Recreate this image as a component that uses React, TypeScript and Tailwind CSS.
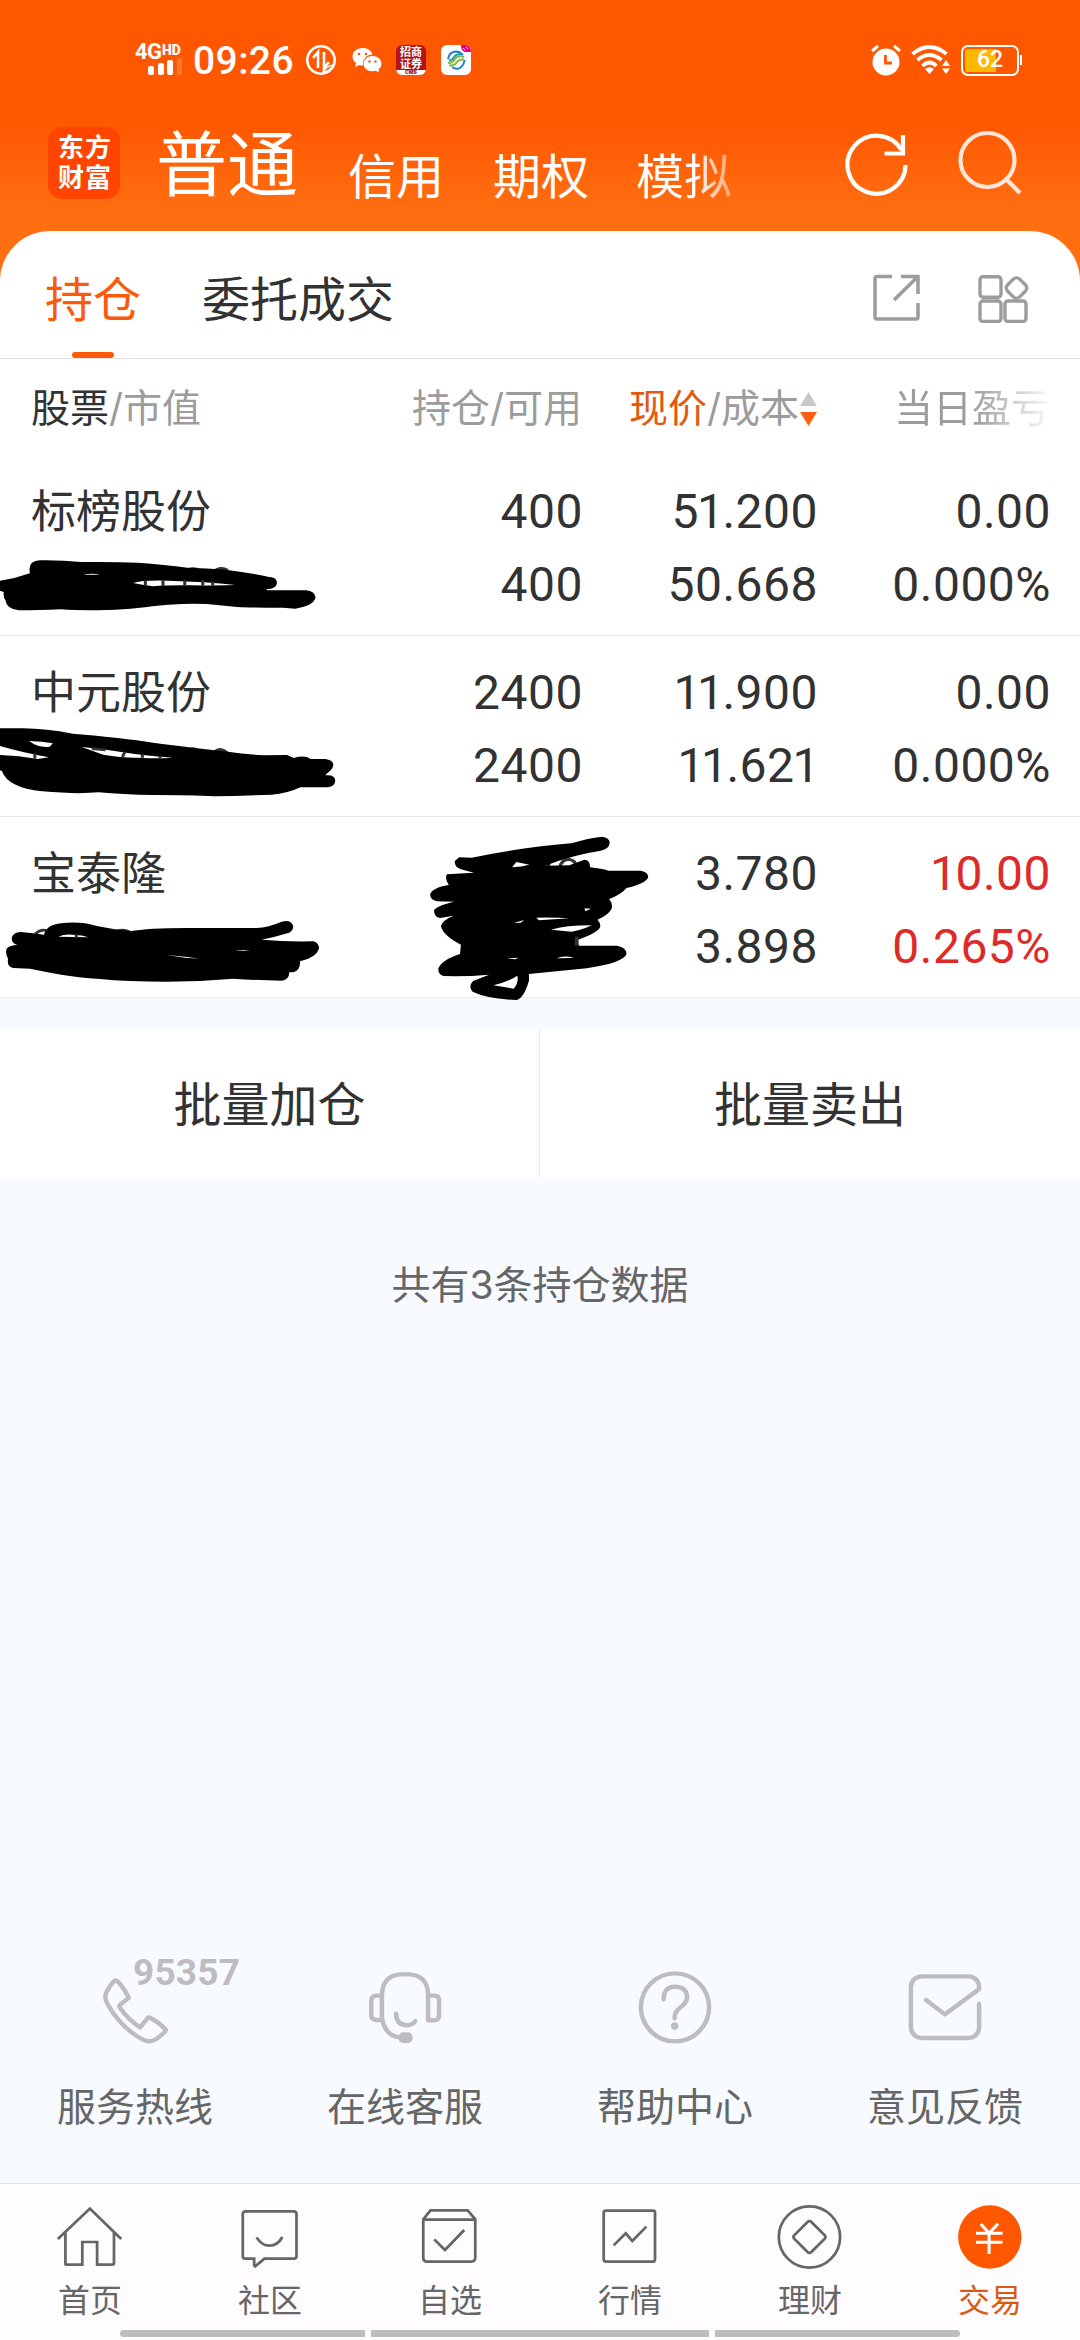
import React from 'react';

type Holding = {
  name: string;
  qty?: [string, string];
  price: [string, string];
  profit: [string, string];
  up?: boolean;
  mask: React.ReactNode;
};

const Mask1 = () => (
  <svg className="absolute left-0 top-[102px] h-[57px] w-[329px]" viewBox="0 290 860 171" preserveAspectRatio="none">
    <path d="M492 326Q505 320 518 326ZM566 326Q580 318 596 328Z" stroke="#333" strokeWidth="5" fill="#333" />
    <path
      fillRule="evenodd"
      d="M0 361Q40 355 78 339L77 326Q77 302 104 300Q160 299 212 305Q300 304 360 307Q430 313 490 322Q540 324 590 328Q650 337 700 349Q724 349 724 368Q722 386 697 387V390H800Q822 392 825 411Q820 437 772 445L740 442Q660 442 620 440L540 431Q500 428 440 433C380 439 340 447 280 449Q210 451 160 447Q100 450 50 450Q17 447 14 419Q8 410 10 395L0 391ZM217 343Q240 338 262 343ZM348 368Q370 359 440 361Q540 364 615 374Q540 376 500 375Q440 374 400 378Q370 373 348 368Z"
    />
    <path d="M380 360V376M426 360V378M483 360V376M530 360V376M556 364V376" stroke="#333" strokeWidth="8" />
  </svg>
);

const Mask2 = () => (
  <svg className="absolute left-0 top-[88px] h-[77px] w-[340px]" viewBox="0 794 888.4 231" preserveAspectRatio="none">
    <path d="M490 872Q505 860 516 872ZM560 876Q575 860 594 878Z" stroke="#333" strokeWidth="5" fill="#333" />
    <path
      fillRule="evenodd"
      d="M0 807H60Q120 808 190 823Q320 835 400 850Q520 868 595 877Q640 885 690 888L750 887L768 896Q795 886 812 899H850Q871 902 871 917Q870 930 855 942L850 948Q876 945 876 965Q874 983 855 984H785Q750 1003 710 1006Q630 1010 560 1011Q500 1007 400 1007Q320 1006 258 999Q200 1005 110 996Q20 985 5 935L0 933ZM0 860V887Q50 889 98 899L128 894Q60 880 0 860ZM76 845Q100 866 130 862L138 852Q110 846 76 845ZM213 863Q250 878 270 886Q320 896 360 895Q420 898 450 895Q370 888 330 880Q270 868 213 863Z"
    />
    <path d="M91 882V898M240 868L276 872M326 878L320 893M372 884V895M418 890V896" stroke="#333" strokeWidth="8" />
  </svg>
);

const Mask3 = () => (
  <svg className="absolute left-0 top-[98px] h-[67px] w-[327px]" viewBox="0 405 981 201" preserveAspectRatio="none">
    <path d="M105 462Q122 446 142 452M350 454Q370 446 390 456" stroke="#333" strokeWidth="8" fill="none" />
    <path
      fillRule="evenodd"
      d="M35 476Q38 456 62 456Q100 459 132 464Q138 433 190 429Q245 424 290 438Q340 448 390 454Q450 443 580 444H770Q805 442 845 425Q875 417 880 440Q878 456 862 460Q820 473 785 479Q860 486 940 484Q957 488 957 506Q948 533 900 544Q902 570 880 577H868Q867 600 846 602Q770 601 700 596Q600 605 500 605Q380 605 300 597C210 591 150 578 90 566L40 564Q20 560 24 536Q15 520 20 506Q29 495 52 495Q36 490 35 476ZM175 470Q195 461 225 465Q245 465 265 472ZM500 525L555 530L600 536L555 533ZM706 512Q730 508 750 512Z"
    />
    <path d="M229 463V474" stroke="#333" strokeWidth="9" />
  </svg>
);

const MaskQty = () => (
  <svg className="absolute left-[421px] top-[11px] h-[177px] w-[234px]" viewBox="48 144 539.6 531" preserveAspectRatio="none">
    <path d="M230 248Q240 254 242 264M342 235V262M368 262Q372 238 390 238Q404 240 408 264" stroke="#333" strokeWidth="8" fill="none" />
    <path
      fillRule="evenodd"
      d="M136 232L165 233Q270 204 395 190Q435 174 465 170Q484 173 483 190Q482 208 460 213Q400 224 335 257L390 256L425 239Q438 240 438 262Q465 266 480 272H555Q572 276 572 292Q565 312 522 324Q510 343 482 357Q490 370 488 385Q482 405 455 419Q463 430 461 442Q457 458 405 482L413 497H500Q522 502 522 522Q515 548 430 565L297 582V602Q285 655 268 660Q200 656 167 635Q156 620 168 603L205 584Q150 590 100 588Q87 582 88 566Q95 540 138 522L140 494Q98 466 94 438Q98 420 123 407L92 414Q78 410 78 392Q81 378 125 365L85 364Q69 360 69 343Q74 323 112 315Q102 295 108 283L170 278L140 268Q124 260 126 243ZM268 246L258 262Q280 261 298 254ZM425 385L440 386L427 394ZM262 429L286 420L278 428ZM314 413Q360 412 390 415L320 421ZM348 449Q380 436 442 436Q415 452 395 455ZM163 514L182 516ZM246 536L272 533L266 538ZM360 535Q380 525 400 534ZM215 616Q250 605 270 587Q274 608 262 626Z"
    />
    <path d="M407 470V497" stroke="#333" strokeWidth="9" />
  </svg>
);

const holdings: Holding[] = [
  { name: '标榜股份', qty: ['400', '400'], price: ['51.200', '50.668'], profit: ['0.00', '0.000%'], mask: <Mask1 /> },
  { name: '中元股份', qty: ['2400', '2400'], price: ['11.900', '11.621'], profit: ['0.00', '0.000%'], mask: <Mask2 /> },
  {
    name: '宝泰隆',
    price: ['3.780', '3.898'],
    profit: ['10.00', '0.265%'],
    up: true,
    mask: (
      <>
        <Mask3 />
        <MaskQty />
      </>
    ),
  },
];

// Tightens the space around the digit 1, which Roboto sets at full tabular width.
const Num = ({ v }: { v: string }) => (
  <span>
    {v.split('').map((c, i) =>
      c === '1' ? (
        <span key={i} className="-ml-[2px] -mr-[2px]">
          {c}
        </span>
      ) : (
        c
      ),
    )}
  </span>
);

const Pair = ({ v, className = '' }: { v?: [string, string]; className?: string }) => (
  <div className={`flex flex-col text-right font-['Roboto'] text-[48px] leading-[73px] tracking-[0.5px] ${className}`}>
    {v && (
      <>
        <Num v={v[0]} />
        <Num v={v[1]} />
      </>
    )}
  </div>
);

const StatusBar = () => (
  <div className="flex h-[120px] items-center pl-[135px] pr-[58px] text-white">
    <div className="relative h-[32px] w-[49px] font-['Roboto']">
      <span className="absolute left-0 top-[-2px] text-[22px] font-bold leading-[20px] tracking-[-0.5px]">4G</span>
      <span className="absolute left-[27px] top-[-1px] text-[14px] font-black leading-[14px]">HD</span>
      <svg className="absolute left-[12px] top-[14px]" width="36" height="17" fill="#fff">
        <rect x="1" y="8" width="6" height="9" rx="2" />
        <rect x="11" y="5" width="6" height="12" rx="2" />
        <rect x="20" y="2" width="6" height="15" rx="2" />
        <rect x="30" y="0" width="5" height="17" rx="2" opacity=".2" />
      </svg>
    </div>
    <span className="ml-[9px] w-[101px] whitespace-nowrap pt-[2px] font-['Roboto'] text-[39px] font-medium leading-[40px] tracking-[0.4px]">09:26</span>
    <svg className="ml-[11px]" width="32" height="32" viewBox="0 0 32 32" fill="none" stroke="#fff" strokeWidth="2.6">
      <circle cx="16" cy="16" r="13.7" />
      <path d="M13 24V8L8 14M19 8V24L24 18" />
      <path d="M18 28Q20 23 28 21Q26 27 18 28Z" fill="#ff5600" strokeWidth="1.6" />
    </svg>
    <svg className="ml-[15px]" width="30" height="26" viewBox="0 0 30 26">
      <path fill="#fff" d="M10.500 1C4.500 1 .5 5 .5 9.600c0 3 1.500 5 3.500 6.500L3.200 20l4-2c1.200.4 2.200.5 3.800.5C10 12 15 7.500 20.500 7.500 19.500 3.500 15.500 1 10.500 1Z" />
      <path fill="#fff" d="M20.500 9c-5 0-9 3.500-9 7.700s4 7.600 9 7.600c1.200 0 2.300-.2 3.300-.5l3.400 1.700-.7-3.200c1.800-1.400 3-3.300 3-5.600C29.500 12.500 25.500 9 20.500 9Z" />
      <g fill="#ff5600">
        <circle cx="7" cy="7" r="1.300" />
        <circle cx="14" cy="7" r="1.300" />
        <circle cx="17.500" cy="14.500" r="1.200" />
        <circle cx="23.500" cy="14.500" r="1.200" />
      </g>
    </svg>
    <div className="ml-[14px] flex h-[30px] w-[30px] flex-col items-center overflow-hidden rounded-[6px] bg-[#b5121a] text-center">
      <span className="h-[12px] pt-[1px] text-[11px] font-bold leading-[12px]">招商</span>
      <span className="h-[13px] pt-px text-[11px] font-bold leading-[12px]">证券</span>
      <span className="h-[5px] w-full bg-white text-[5px] font-black leading-[5px] text-[#a31520]">CMS</span>
    </div>
    <svg className="ml-[15px]" width="30" height="30" viewBox="0 0 30 30">
      <defs>
        <clipPath id="tile">
          <rect width="30" height="30" rx="6" />
        </clipPath>
      </defs>
      <g clipPath="url(#tile)">
        <rect width="30" height="30" fill="#fff" />
        <path d="M20 0H30V7H24Q20 6 20 0Z" fill="#e4007f" />
        <path d="M22 3l2 2M25 2l2 2" stroke="#fff" strokeWidth="1" />
      </g>
      <g fill="none" strokeWidth="1.900">
        <path d="M7 14Q8 7 15 6.500Q19 6.500 22 10M11 22Q15 25 19 23Q23 20 23.500 15" stroke="#1b7fc4" />
        <path d="M7 18Q12 18 14 14Q17 10 23 12M8 20.500Q14 21 16 17Q18 14 23 14.500" stroke="#7dbb3c" />
        <path d="M8 15.500Q12 15 13 12Q16 8 21 9.500" stroke="#1b9bb4" />
      </g>
    </svg>
    <svg className="ml-auto" width="30" height="32" viewBox="0 0 30 32">
      <circle cx="15" cy="18" r="13.500" fill="#fff" />
      <path d="M1 7L7 2M29 7L23 2" stroke="#fff" strokeWidth="3" />
      <path d="M14.500 11V19H21" stroke="#ff5600" strokeWidth="2.800" fill="none" />
    </svg>
    <svg className="ml-[10px]" width="40" height="30" viewBox="0 0 40 30">
      <g fill="none" stroke="#fff" strokeWidth="3.800">
        <path d="M1.500 9Q18.500 -5 35.500 9" />
        <path d="M6.500 15Q18.500 5 30.500 15" />
        <path d="M11.500 21Q18.500 14 25.500 21" />
      </g>
      <path d="M14 24Q18.500 20.500 23 24L18.500 29ZM35 15L39 21H31ZM35 29L39 23.500H31Z" fill="#fff" />
    </svg>
    <div className="relative ml-[10px] flex h-[31px] w-[58px] items-center justify-center rounded-[7px] border-2 border-white p-[2px]">
      <span className="absolute left-[2px] top-[2px] h-[23px] w-[31px] rounded-l-[3px] bg-[#ffb800]" />
      <span className="relative font-['Roboto'] text-[23px] font-medium leading-[22px]">62</span>
    </div>
    <span className="ml-px h-[10px] w-[2px] bg-white" />
  </div>
);

const TopNav = () => (
  <div className="flex h-[111px] items-start pl-[48px] text-white">
    <div className="mt-[7px] flex h-[72px] w-[72px] flex-col items-center rounded-[14px] bg-[#ff4500] pl-[2px] pt-[6px] text-[26px] font-bold leading-[30px] tracking-[1px]">
      <span>东方</span>
      <span>财富</span>
    </div>
    <span className="ml-[36px] text-[71px] leading-[88px]">普通</span>
    <span className="ml-[50px] mt-[26px] text-[48px] leading-[62px]">信用</span>
    <span className="ml-[49px] mt-[26px] text-[48px] leading-[62px]">期权</span>
    <span className="ml-[47px] mt-[26px] bg-gradient-to-r from-white from-60% to-white/40 bg-clip-text text-[48px] leading-[62px] text-transparent">
      模拟
    </span>
    <svg className="ml-[113px] mt-[10px]" width="64" height="68" viewBox="0 0 64 68" fill="none" stroke="#fff" strokeWidth="4.200">
      <path d="M60.500 35A29 29 0 1 1 56.500 20" />
      <path d="M58 5V23.500H39.500" />
    </svg>
    <svg className="ml-[49px] mt-[10px]" width="66" height="68" viewBox="0 0 66 68" fill="none" stroke="#ffe6d8" strokeWidth="4.200">
      <circle cx="29.500" cy="30" r="27" />
      <path d="M48 49L62 63" />
    </svg>
  </div>
);

const services = [
  {
    label: '服务热线',
    box: '0 80 784 270',
    art: (
      <path d="M331 152Q336 148 341 153Q360 173 374 202L347 225Q346 230 349 233Q374 270 407 291L428 264Q432 260 437 263Q462 276 482 299Q480 306 455 325Q435 339 415 328C365 301 335 263 312 221Q301 200 310 184Q318 167 331 152Z" />
    ),
  },
  {
    label: '在线客服',
    box: '784 80 784 270',
    art: (
      <>
        <path d="M1109 196V262Q1117 316 1160 321M1109 196Q1110 136 1162 132H1190Q1240 136 1243 190V270H1262Q1275 268 1275 256V210Q1275 197 1262 196H1243M1109 196H1092Q1078 198 1078 212V254Q1078 268 1092 269H1109M1150 250Q1151 284 1182 285Q1198 284 1206 272" />
        <rect x="1157" y="306" width="41" height="32" rx="14" fill="#bfbcbf" stroke="none" />
      </>
    ),
  },
  {
    label: '帮助中心',
    box: '0 80 784 270',
    art: (
      <>
        <ellipse cx="392" cy="231" rx="99" ry="102" />
        <path d="M359 207Q359 170 392 169Q427 170 427 201Q426 217 407 232Q390 245 391 264" />
        <circle cx="391" cy="287" r="11" fill="#bfbcbf" stroke="none" />
      </>
    ),
  },
  {
    label: '意见反馈',
    box: '784 80 784 270',
    art: (
      <path d="M1121 209L1176 252L1275 177V170Q1273 140 1244 138H1110Q1080 140 1077 168V293Q1080 321 1110 323H1244Q1272 321 1275 293V220" />
    ),
  },
];

const tabs = [
  { label: '首页', box: '0 820 522.700 204', art: <path d="M168 928L261 837L352 928M190 908V1003Q190 1005 194 1005H239V937H282V1005H326Q331 1005 331 1001V908" /> },
  { label: '社区', box: '522.700 820 522.700 204', art: <path d="M712 845H854Q861 846 861 853V980Q861 987 854 987H768L741 1010L738 1007V987H712Q705 987 705 980V853Q705 846 712 845ZM745 923Q760 948 783 948Q806 948 820 922" /> },
  { label: '自选', box: '1045.300 820 522.700 204', art: <path d="M1229 869L1250 842H1358L1380 869V985Q1379 996 1369 996H1239Q1229 995 1229 985ZM1229 870H1380M1261 929L1292 961L1348 901" /> },
  { label: '行情', box: '0 820 522.700 204', art: <path d="M192 843H328Q334 843 334 849V989Q334 996 328 996H192Q185 996 185 989V849Q185 843 192 843ZM214 947L249 911L268 934L309 891" /> },
  {
    label: '理财',
    box: '522.700 820 522.700 204',
    art: (
      <>
        <ellipse cx="782.500" cy="922" rx="89" ry="92" />
        <path d="M777 877Q782.500 871 788 877L827 917Q831 922 827 927L788 967Q782.500 973 777 967L738 927Q734 922 738 917Z" />
      </>
    ),
  },
  {
    label: '交易',
    box: '1045.300 820 522.700 204',
    active: true,
    art: (
      <>
        <ellipse cx="1306" cy="922" rx="92" ry="95" fill="#ff5600" stroke="none" />
        <path d="M1280 883L1304 911L1330 882M1266 911H1343M1266 938H1343M1304 911V973" stroke="#fff" strokeWidth="9" />
      </>
    ),
  },
];

export default function App() {
  return (
    <div className="flex h-[2340px] w-[1080px] flex-col overflow-hidden bg-[#f7faff] font-['Inter','Noto_Sans_CJK_SC',sans-serif] text-[#323232]">
      <header className="h-[290px] shrink-0 bg-[linear-gradient(180deg,#ff5600_0px,#ff5600_115px,#ff6f12_215px,#ff6f12_290px)]">
        <StatusBar />
        <TopNav />
      </header>

      <main className="relative z-10 -mt-[59px] shrink-0 rounded-t-[50px] bg-white">
        <div className="flex h-[128px] items-center border-b border-[#e2e2e2] pl-[45px] pr-[51px] text-[48px]">
          <div className="relative flex h-full items-center text-[#fb5a0a]">
            <span className="mt-[10px]">持仓</span>
            <span className="absolute bottom-0 left-[27px] h-[6px] w-[42px] rounded-full bg-[#fb5a0a]" />
          </div>
          <span className="ml-[61px] mt-[10px]">委托成交</span>
          <svg className="ml-auto mt-[7px]" width="48" height="48" viewBox="0 0 48 48" fill="none" stroke="#9c9c9c" strokeWidth="3.500">
            <path d="M20 2.500H5Q3 2.500 3 4.500V43Q3 45 5 45H44Q46 45 46 43V29M29 2.500H46V20M45 3.500L22 26" />
          </svg>
          <svg className="ml-[58px] mt-[8px]" width="51" height="48" viewBox="0 0 51 48" fill="none" stroke="#9c9c9c" strokeWidth="3.400">
            <rect x="2" y="1.700" width="21" height="20.500" rx="3" />
            <rect x="2" y="26" width="21" height="20.500" rx="3" />
            <rect x="27" y="26" width="21" height="20.500" rx="3" />
            <rect x="30" y="4.500" width="17" height="17" rx="4.500" transform="rotate(45 38.500 13)" />
          </svg>
        </div>

        <div className="grid h-[96px] grid-cols-[1fr_230px_235px_233px] items-center pl-[31px] pr-[30px] pt-[3px] text-[39px] text-[#9c9c9c]">
          <div>
            <span className="text-[#323232]">股票</span>/市值
          </div>
          <div className="text-right">持仓/可用</div>
          <div className="flex items-center justify-end">
            <span>
              <span className="text-[#e05a10]">现价</span>/成本
            </span>
            <svg className="ml-px" width="17" height="36" viewBox="0 0 17 36">
              <path d="M8.500 1L17 15H0Z" fill="#c8c8c8" />
              <path d="M8.500 35L17 21H0Z" fill="#ff6010" />
            </svg>
          </div>
          <div className="flex justify-end">
            <span className="bg-gradient-to-r from-[#9c9c9c] from-50% to-[#fbf8fb] bg-clip-text text-transparent">当日盈亏</span>
          </div>
        </div>

        {holdings.map((h) => (
          <div
            key={h.name}
            className="relative grid h-[181px] grid-cols-[1fr_230px_235px_233px] border-b border-[#ebebeb] pl-[31px] pr-[29px] pt-[20px]"
          >
            <span className="text-[45px] leading-[74px]">{h.name}</span>
            <Pair v={h.qty} />
            <Pair v={h.price} />
            <Pair v={h.profit} className={h.up ? 'text-[#de2a28]' : ''} />
            {h.mask}
          </div>
        ))}
      </main>

      <div className="mt-[30px] grid h-[150px] shrink-0 grid-cols-2 bg-white pt-[3px] text-[48px]">
        <div className="-mt-[3px] flex items-center justify-center border-r border-[#ebebeb] pt-[3px]">批量加仓</div>
        <div className="flex items-center justify-center">批量卖出</div>
      </div>

      <p className="mt-[77px] text-center text-[39px] leading-[60px] text-[#666]">共有3条持仓数据</p>

      <section className="mt-auto grid shrink-0 grid-cols-4 pb-[56px]">
        {services.map((s) => (
          <div key={s.label} className="relative flex flex-col items-center">
            <svg width="270" height="90" viewBox={s.box} preserveAspectRatio="none" fill="none" stroke="#bfbcbf" strokeWidth="13" strokeLinecap="round" strokeLinejoin="round">
              {s.art}
            </svg>
            {s.label === '服务热线' && (
              <span className="absolute left-[133px] top-[-3px] font-['Roboto'] text-[37px] font-bold leading-[38px] tracking-[0.2px] text-[#bfbcbf]">
                95357
              </span>
            )}
            <span className="mt-[40px] text-[39px] leading-[40px] text-[#666]">{s.label}</span>
          </div>
        ))}
      </section>

      <nav className="relative grid h-[157px] shrink-0 grid-cols-6 border-t border-[#e4e4e8] bg-[#fffcff] pt-[19px]">
        {tabs.map((t) => (
          <div key={t.label} className="flex flex-col items-center">
            <svg width="180" height="68" viewBox={t.box} preserveAspectRatio="none" fill="none" stroke="#666" strokeWidth="8">
              {t.art}
            </svg>
            <span className={`text-[32px] leading-[60px] ${t.active ? 'text-[#d95a14]' : 'text-[#666]'}`}>{t.label}</span>
          </div>
        ))}
        <div className="absolute bottom-[3px] left-[120px] flex h-[7px] w-[840px] gap-[6px]">
          <span className="w-[245px] rounded-l-full bg-[#bdbdbd]" />
          <span className="flex-1 bg-[#bdbdbd]" />
          <span className="w-[245px] rounded-r-full bg-[#bdbdbd]" />
        </div>
      </nav>
    </div>
  );
}
